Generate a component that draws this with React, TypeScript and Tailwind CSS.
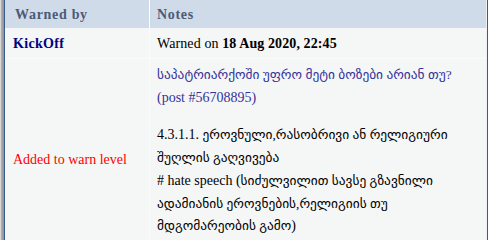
export default function App() {
  const font = { fontFamily: '"Liberation Serif", "DejaVu Sans", serif' }
  const ka = 'text-[13.4px]'
  return (
    <div className="flex h-[240px] w-[488px] overflow-hidden bg-white" style={font}>
      {/* left window edge */}
      <div className="w-px shrink-0 bg-[#d9d9d9]" />
      <div className="w-[3px] shrink-0 bg-gradient-to-r from-[#b4b4b4] to-[#8f8f8f]" />
      <div className="w-px shrink-0 bg-[#3b5b8c]" />
      <div className="flex min-w-0 flex-1 flex-col bg-[#f5f6f6] text-[14px] text-black">
        <div className="flex h-[28px] shrink-0 bg-[#cfdbe9] font-bold tracking-[0.7px] text-[#4b5a76]">
          <div className="flex w-[145px] items-center border-r border-white pl-[10px]">Warned by</div>
          <div className="flex flex-1 items-center pl-[7px]">Notes</div>
        </div>
        <div className="flex h-[31px] shrink-0 border-b border-[#fbfbfb]">
          <div className="flex w-[145px] items-center border-r border-[#fbfbfb] pl-[8px] font-bold tracking-[0.3px] text-[#000080]">
            KickOff
          </div>
          <div className="flex flex-1 items-center pl-[7px] tracking-[0.1px]">
            <span>
              Warned on <b>18 Aug 2020, 22:45</b>
            </span>
          </div>
        </div>
        <div className="flex flex-1">
          <div className="flex w-[145px] items-center border-r border-[#fbfbfb] pl-[8px] pb-[36px] pt-[56px] text-[#ff0000]">
            Added to warn level
          </div>
          <div className="flex-1 pl-[7px] pr-[8px] pt-[5px] leading-[22.7px]">
            <div className="text-[#333399]">
              <span className={ka}>საპატრიარქოში უფრო მეტი ბოზები არიან თუ?</span>
              <br />
              (post #56708895)
            </div>
            <div className="mt-[15px]">
              4.3.1.1. <span className={ka}>ეროვნული,რასობრივი ან რელიგიური შუღლის გაღვივება</span>
              <br /># hate speech (
              <span className={ka}>
                სიძულვილით სავსე გზავნილი ადამიანის ეროვნების,რელიგიის თუ მდგომარეობის გამო
              </span>
              )
            </div>
          </div>
        </div>
      </div>
      <div className="w-px shrink-0 bg-[#eef1f5]" />
      <div className="w-px shrink-0 bg-[#3b5b8c]" />
    </div>
  )
}
